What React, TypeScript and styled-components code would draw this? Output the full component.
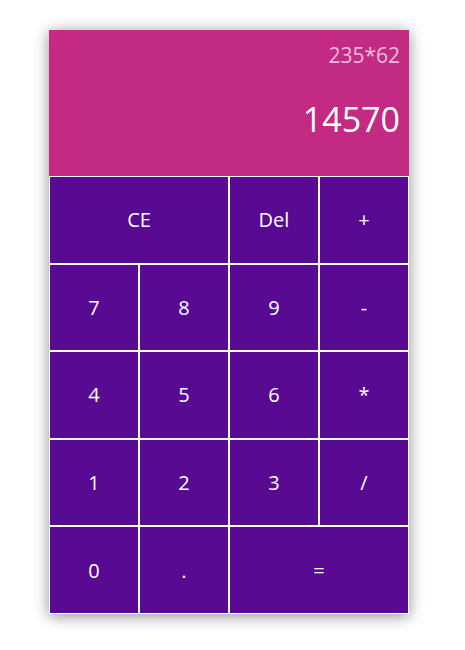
import React from "react";
import styled, { createGlobalStyle } from "styled-components";

const Global = createGlobalStyle`
  html, body { margin: 0; padding: 0; background: #ffffff; }
  body { font-family: "Open Sans", "Noto Sans", sans-serif; }
`;

const Page = styled.div`
  padding: 30px 0 36px 49px;
`;

const Calculator = styled.div`
  width: 360px;
  display: flex;
  flex-direction: column;
  box-shadow: 0 2px 14px rgba(0, 0, 0, 0.45);
`;

const Display = styled.div`
  height: 146px;
  background: #c32a84;
  display: flex;
  flex-direction: column;
  align-items: flex-end;
  padding: 10px 9px 0 0;
  box-sizing: border-box;
`;

const Expression = styled.div`
  font-size: 21px;
  line-height: 30px;
  color: rgba(255, 255, 255, 0.7);
`;

const Result = styled.div`
  margin-top: 27px;
  font-size: 34px;
  line-height: 44px;
  color: #ffffff;
`;

const Keys = styled.div`
  display: grid;
  grid-template-columns: repeat(4, 1fr);
  grid-template-rows: repeat(5, 87.6px);
`;

const Key = styled.button<{ $span?: number }>`
  grid-column: span ${(p) => p.$span ?? 1};
  box-sizing: border-box;
  min-height: 0;
  height: 100%;
  background: #580a93;
  border: 1px solid #ffffff;
  color: #ffffff;
  font-family: "Open Sans", "Noto Sans", sans-serif;
  font-size: 20px;
  padding: 0;
  margin: 0;
  cursor: pointer;
`;

const keys: { label: string; span?: number }[] = [
  { label: "CE", span: 2 },
  { label: "Del" },
  { label: "+" },
  { label: "7" },
  { label: "8" },
  { label: "9" },
  { label: "-" },
  { label: "4" },
  { label: "5" },
  { label: "6" },
  { label: "*" },
  { label: "1" },
  { label: "2" },
  { label: "3" },
  { label: "/" },
  { label: "0" },
  { label: "." },
  { label: "=", span: 2 },
];

export default function App() {
  return (
    <>
      <Global />
      <Page>
        <Calculator>
          <Display>
            <Expression>235*62</Expression>
            <Result>14570</Result>
          </Display>
          <Keys>
            {keys.map((k) => (
              <Key key={k.label} $span={k.span}>
                {k.label}
              </Key>
            ))}
          </Keys>
        </Calculator>
      </Page>
    </>
  );
}
